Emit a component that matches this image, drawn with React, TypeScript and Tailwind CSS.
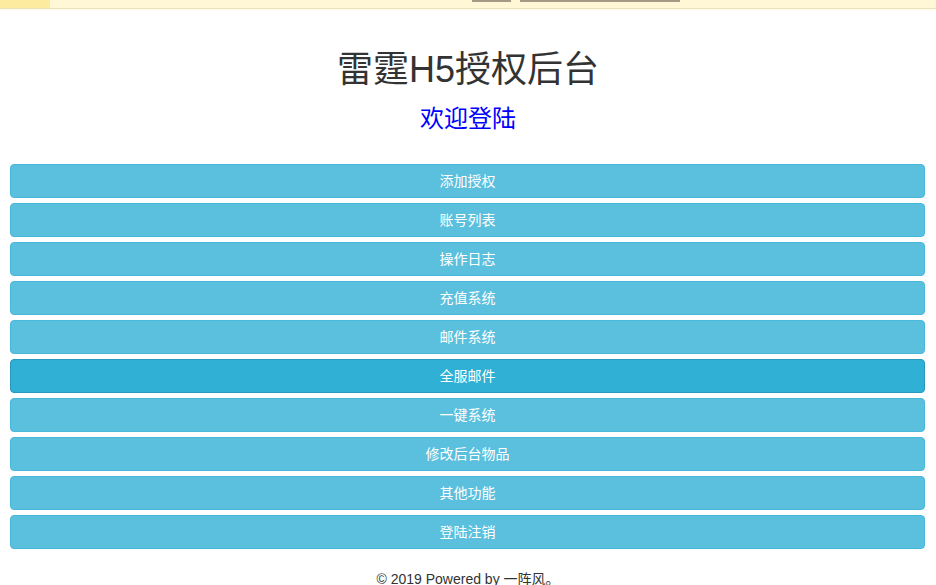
import React from "react";

const items = [
  "添加授权",
  "账号列表",
  "操作日志",
  "充值系统",
  "邮件系统",
  "全服邮件",
  "一键系统",
  "修改后台物品",
  "其他功能",
  "登陆注销",
];

export default function App() {
  return (
    <div
      className="w-[936px] h-[585px] overflow-hidden bg-white text-[#333]"
      style={{ fontFamily: '"Liberation Sans", Arial, "Noto Sans CJK SC", sans-serif' }}
    >
      <div className="relative h-[9px] bg-[#fff7d6] border-b border-[#ebe3bd] flex">
        <div className="w-[50px] h-full bg-[#fdeb9f]" />
        <div className="absolute left-[472px] top-0 w-[39px] h-[2px] bg-[#a59a84]" />
        <div className="absolute left-[520px] top-0 w-[160px] h-[2px] bg-[#a59a84]" />
      </div>
      <div className="h-[3px] bg-gradient-to-b from-[#fffbe8] to-white" />
      <h1 className="mt-[38px] text-center text-[36px] leading-[40px] font-normal text-[#333]">
        雷霆H5授权后台
      </h1>
      <h3 className="mt-[16px] text-center text-[24px] leading-[26px] font-normal text-[#0000ff]">
        欢迎登陆
      </h3>
      <div className="mt-[32px] pl-[10px] pr-[11px] flex flex-col gap-[5px]">
        {items.map((t) => {
          const active = t === "全服邮件";
          return (
            <div
              key={t}
              className={
                active
                  ? "h-[34px] rounded-[4px] border border-[#269abc] bg-[#31b0d5] text-white text-[14px] flex items-center justify-center"
                  : "h-[34px] rounded-[4px] border border-[#46b8da] bg-[#5bc0de] text-white text-[14px] flex items-center justify-center"
              }
            >
              {t}
            </div>
          );
        })}
      </div>
      <div className="mt-[20px] text-center text-[14px] leading-[20px] text-[#333]">
        © 2019 Powered by 一阵风。
      </div>
    </div>
  );
}
